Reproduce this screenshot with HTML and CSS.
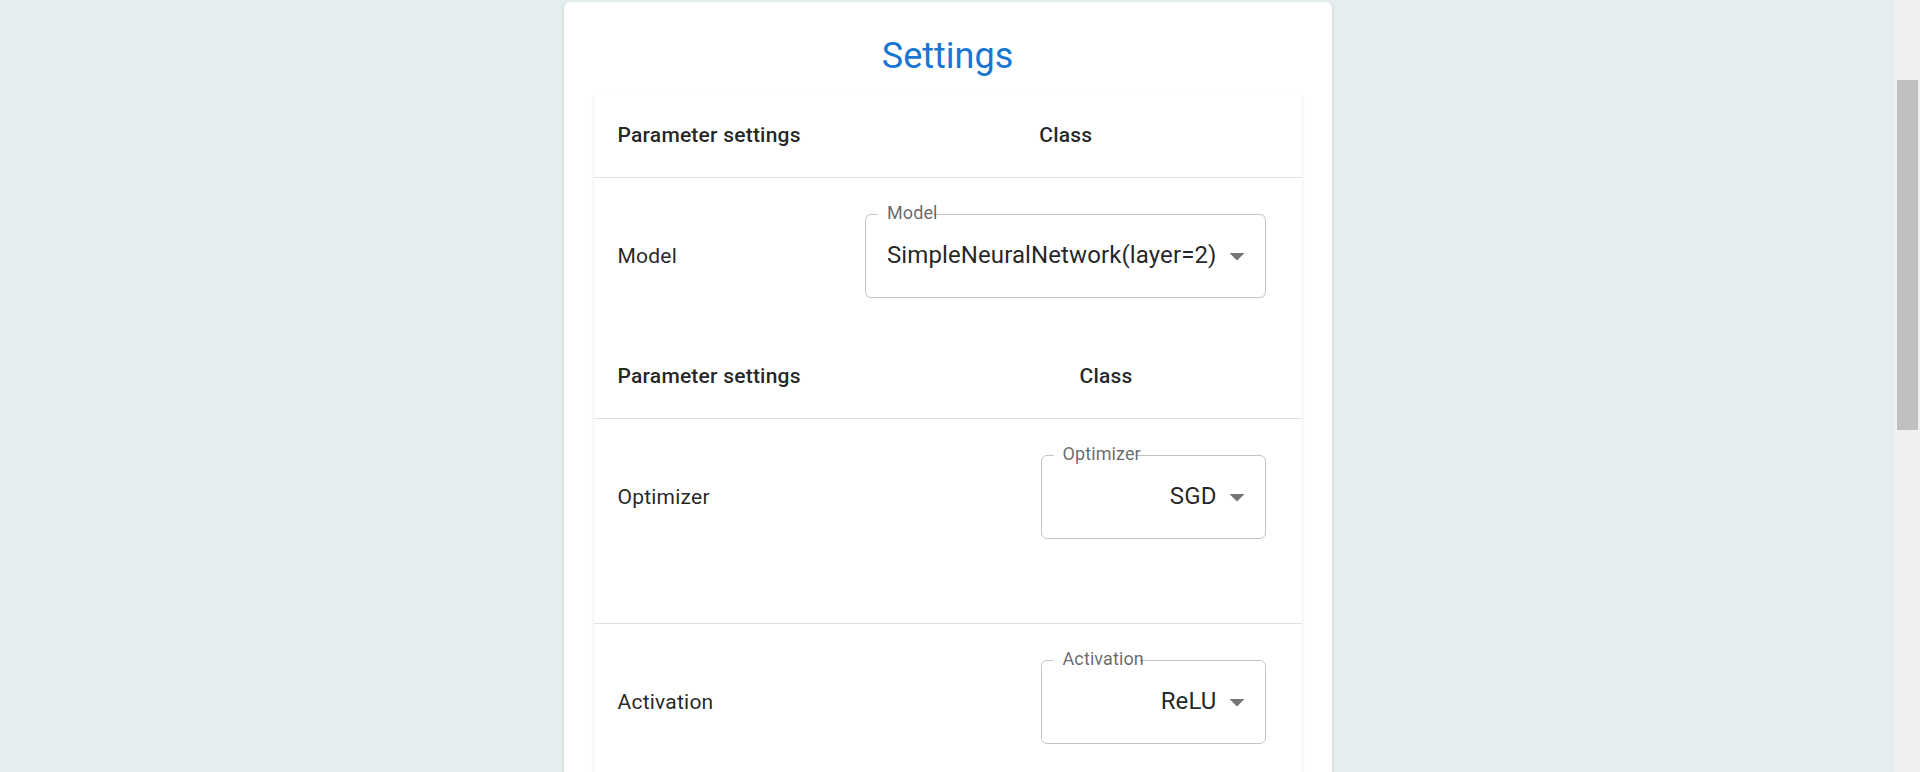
FILE: index.html
```html
<!DOCTYPE html>
<html lang="en">
<head>
<meta charset="utf-8">
<title>Settings</title>
<link rel="stylesheet" href="styles.css">
</head>
<body>
<div class="page">
  <main class="settings-card">
    <h1 class="title">Settings</h1>
    <div class="table-paper">
      <table class="param-table">
        <thead>
          <tr><th>Parameter settings</th><th class="col-class">Class</th></tr>
        </thead>
        <tbody>
          <tr class="param-row">
            <td>Model</td>
            <td class="cell-select">
              <div class="select">
                <span class="select-label">Model</span>
                <span class="select-value">SimpleNeuralNetwork(layer=2)</span>
                <svg class="select-arrow" viewBox="0 0 24 24"><path d="M7 10l5 5 5-5z"/></svg>
              </div>
            </td>
          </tr>
        </tbody>
      </table>
      <table class="param-table">
        <thead>
          <tr><th>Parameter settings</th><th class="col-class">Class</th></tr>
        </thead>
        <tbody>
          <tr class="param-row">
            <td>Optimizer</td>
            <td class="cell-select">
              <div class="select">
                <span class="select-label">Optimizer</span>
                <span class="select-value">SGD</span>
                <svg class="select-arrow" viewBox="0 0 24 24"><path d="M7 10l5 5 5-5z"/></svg>
              </div>
            </td>
          </tr>
          <tr class="detail-row"><td colspan="2"></td></tr>
          <tr class="param-row">
            <td>Activation</td>
            <td class="cell-select">
              <div class="select">
                <span class="select-label">Activation</span>
                <span class="select-value">ReLU</span>
                <svg class="select-arrow" viewBox="0 0 24 24"><path d="M7 10l5 5 5-5z"/></svg>
              </div>
            </td>
          </tr>
          <tr class="detail-row"><td colspan="2"></td></tr>
        </tbody>
      </table>
    </div>
  </main>
</div>
<div class="scrollbar" aria-hidden="true"><div class="scrollbar-thumb"></div></div>
</body>
</html>
```

FILE: styles.css
```css
html {
  background: #e4eeef;
}

body {
  margin: 0;
  font-family: Roboto, "Liberation Sans", Arial, sans-serif;
  color: rgba(0, 0, 0, 0.87);
}

.page {
  box-sizing: border-box;
  padding: 2px 25px 40px 0;
  display: flex;
  justify-content: center;
  align-items: flex-start;
}

.settings-card {
  width: 768px;
  box-sizing: border-box;
  padding: 30px;
  background: #fff;
  border-radius: 6px;
  box-shadow: 0 2px 1px -1px rgba(0, 0, 0, 0.2), 0 1px 1px 0 rgba(0, 0, 0, 0.14), 0 1px 3px 0 rgba(0, 0, 0, 0.12);
}

.title {
  margin: 0 0 13px;
  font-size: 36px;
  font-weight: 400;
  line-height: 48px;
  text-align: center;
  color: #1976d2;
}

.table-paper {
  background: #fff;
  border-radius: 6px;
  overflow: hidden;
  box-shadow: 0 2px 1px -1px rgba(0, 0, 0, 0.2), 0 1px 1px 0 rgba(0, 0, 0, 0.14), 0 1px 3px 0 rgba(0, 0, 0, 0.12);
}

.param-table {
  width: 100%;
  border-collapse: collapse;
  border-spacing: 0;
}

.param-table th {
  font-size: 21px;
  font-weight: 500;
  line-height: 36px;
  letter-spacing: 0.01071em;
  padding: 24px;
  text-align: left;
  border-bottom: 1px solid #e0e0e0;
}

.param-table th.col-class {
  text-align: center;
}

.param-table td {
  font-size: 21px;
  line-height: 30px;
  letter-spacing: 0.01071em;
  padding: 24px;
  text-align: left;
  vertical-align: middle;
}

.param-row td {
  border-bottom: none;
}

.detail-row td {
  border-bottom: 1px solid #e0e0e0;
}

.param-table td.cell-select {
  text-align: right;
}

.select {
  position: relative;
  display: block;
  width: fit-content;
  min-width: 225px;
  box-sizing: border-box;
  height: 84px;
  margin: 12px 12px 12px auto;
  padding: 23px 48px 25px 21px;
  border: 1px solid rgba(0, 0, 0, 0.23);
  border-radius: 6px;
  font-size: 24px;
  line-height: 34px;
  letter-spacing: 0.0045em;
  text-align: right;
  white-space: nowrap;
}

.select-label {
  position: absolute;
  top: -15px;
  left: 12px;
  padding-left: 9px;
  font-size: 18px;
  line-height: 26px;
  color: rgba(0, 0, 0, 0.6);
  white-space: nowrap;
  background: linear-gradient(to right, #fff calc(100% - 4px), transparent calc(100% - 4px));
}

.select-value {
  color: rgba(0, 0, 0, 0.87);
}

.select-arrow {
  position: absolute;
  right: 10px;
  top: 50%;
  width: 36px;
  height: 36px;
  margin-top: -18px;
  fill: rgba(0, 0, 0, 0.54);
}

.scrollbar {
  position: fixed;
  top: 0;
  right: 0;
  width: 25px;
  height: 100vh;
  background: #f0f0f0;
}

.scrollbar-thumb {
  margin: 80px 2px 0;
  height: 350px;
  background: #c0c0c0;
}
```
